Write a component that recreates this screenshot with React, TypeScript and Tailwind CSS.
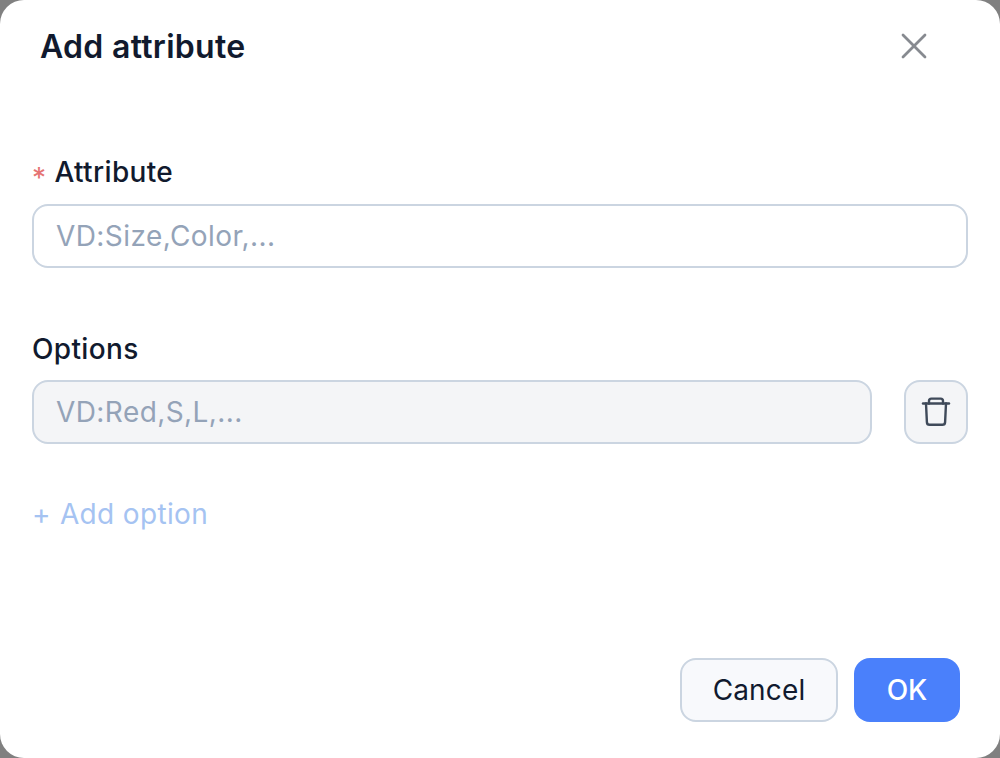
import { X } from 'lucide-react'

const TrashIcon = () => (
  <svg viewBox="0 0 32 32" fill="none" stroke="currentColor" strokeWidth="2.4" strokeLinecap="round" strokeLinejoin="round" className="h-8 w-8">
    <path d="M9 7.5V5a2.4 2.4 0 0 1 2.4-2.4h9.2A2.4 2.4 0 0 1 23 5v2.5" />
    <path d="M3 7.5h26" />
    <path d="M6 7.5l.9 18.6a2.8 2.8 0 0 0 2.8 2.7h12.6a2.8 2.8 0 0 0 2.8-2.7L26 7.5" />
  </svg>
)

const App = () => {
  return (
    <div className="h-[758px] w-[1000px] overflow-hidden bg-[#808080] font-['Inter',sans-serif]">
      <div className="flex h-full flex-col rounded-[24px] bg-white">
        <div className="flex h-[93px] items-center justify-between pl-10 pr-[64px]">
          <h2 className="text-[32px] leading-[38px] font-semibold tracking-[0.3px] text-[#111a2e]">Add attribute</h2>
          <X className="mb-[2px] h-11 w-11 text-[#878a90]" strokeWidth={1.5} />
        </div>

        <div className="flex flex-1 flex-col px-8 pt-[61px]">
          <label className="flex h-9 text-[28px] leading-9 font-medium tracking-[0.35px] text-[#111a2e]">
            <span className="mt-[6px] mr-[8px] font-normal text-[#e57373]">*</span>
            Attribute
          </label>
          <input
            readOnly
            placeholder="VD:Size,Color,..."
            className="mt-[14px] h-16 w-full rounded-[16px] border-2 border-[#cbd5e1] bg-white px-[22px] text-[28px] tracking-[0.42px] outline-none placeholder:text-[#94a3b8]"
          />

          <label className="mt-[63px] flex h-9 items-center text-[28px] font-medium tracking-[0.35px] text-[#111a2e]">Options</label>
          <div className="mt-[13px] flex items-center gap-8">
            <input
              readOnly
              placeholder="VD:Red,S,L,..."
              className="h-16 flex-1 rounded-[16px] border-2 border-[#cbd5e1] bg-[#f4f5f7] px-[22px] text-[28px] tracking-[0.42px] outline-none placeholder:text-[#94a3b8]"
            />
            <button type="button" className="flex h-16 w-16 items-center justify-center rounded-[16px] border-2 border-[#cbd5e1] bg-[#f4f5f7] text-[#3f4a5a]">
              <TrashIcon />
            </button>
          </div>

          <div className="mt-[52px] flex h-9 items-center gap-[9px] text-[28px] tracking-[0.35px] text-[#a5c3f2]">
            <span>+</span>
            <span>Add option</span>
          </div>
        </div>

        <div className="flex justify-end gap-4 pr-10 pb-9">
          <button type="button" className="h-16 w-[158px] rounded-[16px] border-2 border-[#cbd5e1] bg-[#f8f9fc] text-[28px] tracking-[0.15px] text-[#111a2e]">
            Cancel
          </button>
          <button type="button" className="h-16 w-[106px] rounded-[16px] bg-[#4a80fb] text-[28px] font-medium text-white">
            OK
          </button>
        </div>
      </div>
    </div>
  )
}

export default App
